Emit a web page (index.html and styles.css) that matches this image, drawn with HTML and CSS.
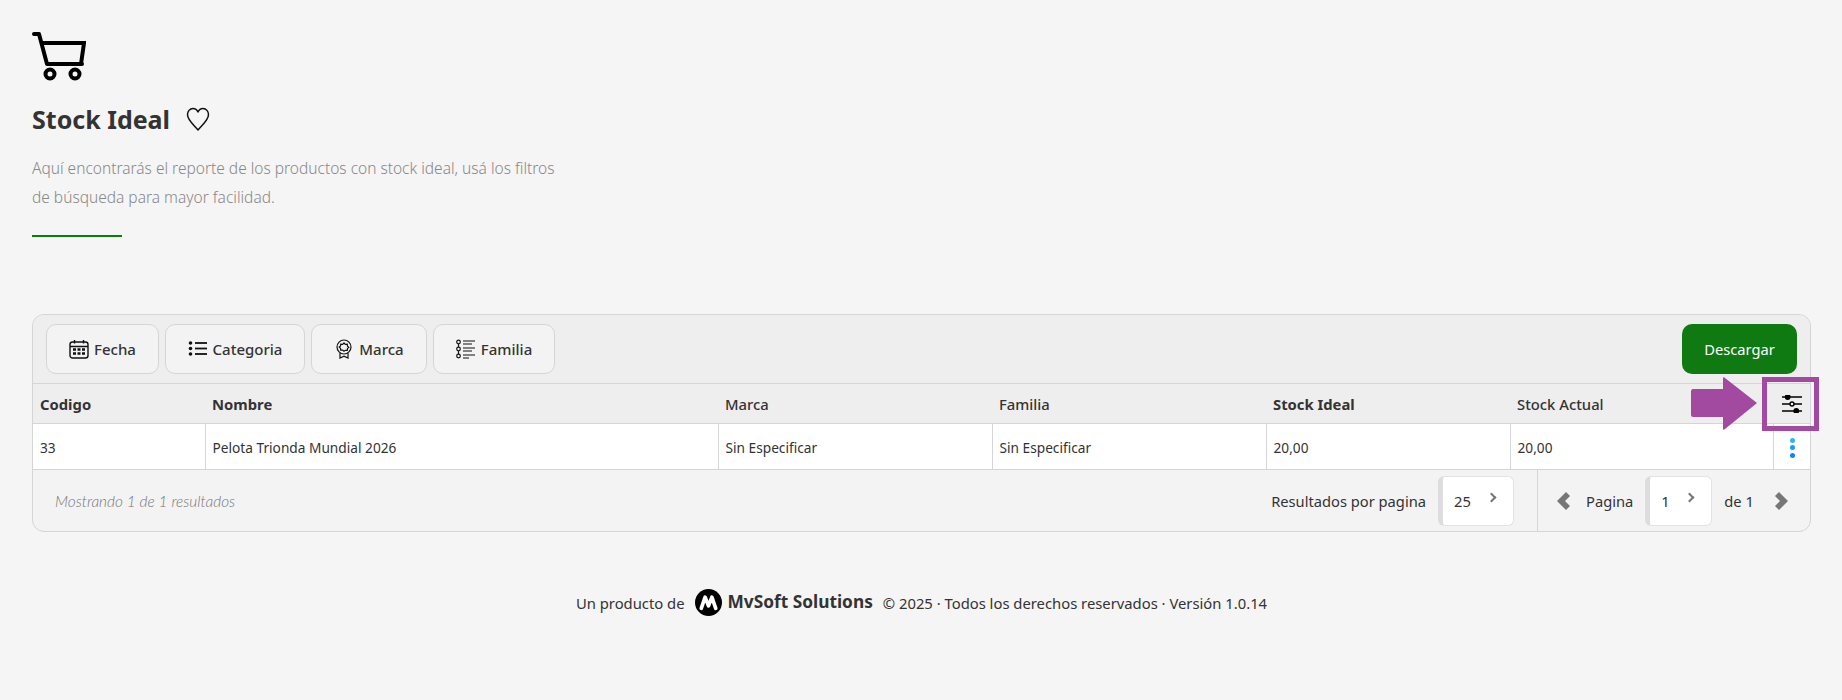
FILE: index.html
```html
<!DOCTYPE html>
<html lang="es">
<head>
  <meta charset="UTF-8" />
  <meta name="viewport" content="width=device-width, initial-scale=1.0"/>
  <title>Stock Ideal</title>
  <link rel="stylesheet" href="styles.css">
</head>
<body>

  <header class="page-head">
    <svg class="cart-icon" viewBox="0 0 54 49" fill="none" stroke="#000" stroke-width="4">
      <path d="M2 2h5l8 30h35" stroke-linejoin="round" stroke-linecap="round"/>
      <path d="M9 11h43l-3 21"/>
      <circle cx="18" cy="42" r="4.500"/>
      <circle cx="43" cy="42" r="4.500"/>
    </svg>
    <div class="title-row">
      <h1>Stock Ideal</h1>
      <svg class="heart-icon" viewBox="0 0 24 24" fill="none" stroke="#111" stroke-width="1.500">
        <path d="M12 23C7 17 1.500 13 1.500 7.500c0-3 2.200-6 5.500-6 2.200 0 4 1.300 5 3.500 1-2.200 2.800-3.500 5-3.500 3.300 0 5.500 3 5.500 6C22.500 13 17 17 12 23z" stroke-linejoin="round"/>
      </svg>
    </div>
    <p class="subtitle">Aquí encontrarás el reporte de los productos con stock ideal, usá los filtros de búsqueda para mayor facilidad.</p>
    <div class="green-line"></div>
  </header>

  <section class="report">
    <div class="toolbar">
      <div class="filters">
        <button class="filter-btn w-fecha">
          <svg class="btn-icon" viewBox="0 0 20 20" fill="none" stroke="#111" stroke-width="1.400">
            <rect x="1" y="3" width="18" height="16" rx="2.500"/>
            <path d="M1 7.500h18M5.500 1v3.500M14.500 1v3.500"/>
            <path d="M4 10.500h3M8.500 10.500h3M13 10.500h3M4 14.500h3M8.500 14.500h3M13 14.500h3" stroke-width="2.400"/>
          </svg>
          Fecha
        </button>
        <button class="filter-btn w-categoria">
          <svg class="btn-icon" viewBox="0 0 20 20" fill="#111">
            <circle cx="2.500" cy="4" r="1.800"/><circle cx="2.500" cy="9.500" r="1.800"/><circle cx="2.500" cy="15" r="1.800"/>
            <rect x="7" y="3.100" width="12" height="1.800"/><rect x="7" y="8.600" width="12" height="1.800"/><rect x="7" y="14.100" width="12" height="1.800"/>
          </svg>
          Categoria
        </button>
        <button class="filter-btn w-marca">
          <svg class="btn-icon" viewBox="0 0 20 20" fill="none" stroke="#111" stroke-width="1.200">
            <circle cx="10" cy="8" r="7"/>
            <path d="M10 3.800l1.300 1.500 2-.1.200 2 1.300 1-1.300 1.300-.2 1.800-2 0L10 12.200l-1.300-1.200-2 .1-.2-1.900L5.200 8l1.300-1 .2-1.800 2 .1z"/>
            <path d="M6 14v5l4-1.800 4 1.800v-5"/>
          </svg>
          Marca
        </button>
        <button class="filter-btn w-familia">
          <svg class="btn-icon" viewBox="0 0 20 20" fill="none" stroke="#111" stroke-width="1.200">
            <circle cx="2.500" cy="3" r="1.800"/><circle cx="2.500" cy="10" r="1.800"/><circle cx="2.500" cy="17" r="1.800"/>
            <path d="M2.500 5v3M2.500 12v3M7 2h12M7 5h9M7 9h12M7 12h9M7 16h12M7 19h6"/>
          </svg>
          Familia
        </button>
      </div>
      <button class="download-btn">Descargar</button>
    </div>

    <table class="stock-table">
      <colgroup>
        <col class="col-codigo"><col class="col-nombre"><col class="col-marca"><col class="col-familia"><col class="col-ideal"><col class="col-actual"><col class="col-actions">
      </colgroup>
      <thead>
        <tr>
          <th class="strong">Codigo</th>
          <th class="strong">Nombre</th>
          <th>Marca</th>
          <th>Familia</th>
          <th class="strong">Stock Ideal</th>
          <th>Stock Actual</th>
          <th class="actions">
            <svg class="sliders-icon" viewBox="0 0 20 18" fill="#000" stroke="#000" stroke-width="1.400">
              <path d="M0 2h20M0 9h20M0 16h20" fill="none"/>
              <circle cx="5.700" cy="2" r="2.200"/>
              <circle cx="10" cy="9" r="2" fill="#eee"/>
              <circle cx="14.300" cy="16" r="2.200"/>
            </svg>
          </th>
        </tr>
      </thead>
      <tbody>
        <tr>
          <td>33</td>
          <td>Pelota Trionda Mundial 2026</td>
          <td>Sin Especificar</td>
          <td>Sin Especificar</td>
          <td>20,00</td>
          <td>20,00</td>
          <td class="actions">
            <span class="dots"><i></i><i></i><i></i></span>
          </td>
        </tr>
      </tbody>
    </table>

    <div class="report-foot">
      <span class="showing">Mostrando 1 de 1 resultados</span>
      <div class="per-page">
        <span>Resultados por pagina</span>
        <div class="select-box w-perpage"><span>25</span><span class="caret"></span></div>
      </div>
      <div class="pager">
        <svg class="pager-arrow prev" viewBox="0 0 14 18" fill="#777"><path d="M9 0l4 4-5 5 5 5-4 4-9-9z"/></svg>
        <span>Pagina</span>
        <div class="select-box w-page"><span>1</span><span class="caret"></span></div>
        <span>de 1</span>
        <svg class="pager-arrow next" viewBox="0 0 14 18" fill="#777"><path d="M5 0l-4 4 5 5-5 5 4 4 9-9z"/></svg>
      </div>
    </div>

    <!-- highlight drawn over the screenshot -->
    <svg class="callout-arrow" viewBox="0 0 67 53" fill="#a24a9f"><path d="M2 12h30V1c0-1 1-1 2 0l32 25-32 26c-1 1-2 1-2 0V40H2c-1 0-2-1-2-2V14c0-1 1-2 2-2z"/></svg>
    <div class="callout-box"></div>
  </section>

  <footer class="page-foot">
    <span>Un producto de</span>
    <span class="brand">
      <svg class="brand-logo" viewBox="0 0 28 28">
        <circle cx="14" cy="14" r="14" fill="#000"/>
        <path d="M6.500 20L10.500 8.500l3.500 9 3.500-9L21.500 20" fill="none" stroke="#fff" stroke-width="3.800" stroke-linecap="round" stroke-linejoin="round"/>
      </svg>
      <b>MvSoft Solutions</b>
    </span>
    <span class="legal">© 2025 · Todos los derechos reservados · Versión 1.0.14</span>
  </footer>

</body>
</html>
```

FILE: styles.css
```css
* {
  box-sizing: border-box;
}

body {
  margin: 0;
  padding: 32px 31px 0 32px;
  background-color: #f5f5f5;
  color: #333;
  font-family: 'Noto Sans', 'Open Sans', sans-serif;
  font-size: 13.7px;
}

.page-head {
  height: 282px;
}

.cart-icon {
  display: block;
  width: 54px;
  height: 49px;
}

.title-row {
  display: flex;
  align-items: center;
  gap: 16px;
  margin-top: 22px;
  height: 32px;
}

h1 {
  margin: 0;
  font-size: 25px;
  font-weight: 700;
  color: #333;
}

.heart-icon {
  width: 24px;
  height: 24px;
}

.subtitle {
  margin: 19px 0 0;
  width: 540px;
  font-size: 15.500px;
  font-weight: 300;
  line-height: 29px;
  color: #888;
}

.green-line {
  width: 90px;
  height: 2px;
  margin-top: 23px;
  background: #0a7d0a;
}

.report {
  position: relative;
  border: 1px solid #d5d5d5;
  border-radius: 12px;
  background: #f3f3f3;
}

.toolbar {
  display: flex;
  justify-content: space-between;
  align-items: center;
  height: 68px;
  padding: 0 13px;
  background: #eee;
  border-radius: 12px 12px 0 0;
}

.filters {
  display: flex;
  gap: 6px;
}

.filter-btn {
  display: flex;
  align-items: center;
  justify-content: center;
  gap: 5px;
  height: 50px;
  background: #f3f3f3;
  border: 1px solid #d5d5d5;
  border-radius: 10px;
  font: 500 15px 'Noto Sans', sans-serif;
  color: #333;
}

.w-fecha { width: 113px; }
.w-categoria { width: 140px; }
.w-marca { width: 116px; }
.w-familia { width: 122px; }

.btn-icon {
  width: 20px;
  height: 20px;
}

.download-btn {
  width: 115px;
  height: 50px;
  background: #0f7a12;
  border: none;
  border-radius: 10px;
  color: #fff;
  font: 400 14.700px 'Noto Sans', sans-serif;
}

.stock-table {
  width: 100%;
  table-layout: fixed;
  border-collapse: collapse;
}

.col-codigo { width: 172px; }
.col-nombre { width: 513px; }
.col-marca { width: 274px; }
.col-familia { width: 274px; }
.col-ideal { width: 244px; }
.col-actual { width: 263px; }

.stock-table th {
  height: 40px;
  padding: 0 7px;
  text-align: left;
  font-size: 14.800px;
  font-weight: 500;
  background: #eee;
  border-top: 1px solid #d5d5d5;
  border-bottom: 1px solid #d5d5d5;
}

.stock-table th.strong {
  font-weight: 700;
}

.stock-table td {
  height: 46px;
  padding: 1px 7px 0;
  background: #fff;
  border-bottom: 1px solid #d5d5d5;
  border-right: 1px solid #d5d5d5;
}

.stock-table td:last-child {
  border-right: none;
}

.actions {
  text-align: center !important;
}

.sliders-icon {
  display: block;
  width: 20px;
  height: 18px;
  margin: 0 auto;
}

.dots {
  display: inline-flex;
  flex-direction: column;
  gap: 2.500px;
  margin-left: 1px;
  vertical-align: middle;
}

.dots i {
  width: 5px;
  height: 5px;
  border-radius: 50%;
  background: #1a9bf5;
}

.dots i:first-child {
  background: #29b6f6;
}

.dots i:last-child {
  background: #0a84ff;
}

.report-foot {
  display: flex;
  align-items: center;
  height: 61px;
  padding-left: 22px;
}

.showing {
  flex: 1;
  font-family: 'Lato', sans-serif;
  font-size: 15.400px;
  font-style: italic;
  font-weight: 300;
  color: #777;
}

.per-page {
  display: flex;
  align-items: center;
  gap: 12px;
  padding-right: 23px;
  font-size: 14.700px;
}

.pager {
  display: flex;
  align-items: center;
  gap: 12px;
  width: 273px;
  height: 100%;
  padding: 0 19px;
  border-left: 1px solid #d5d5d5;
  font-size: 14.700px;
}

.pager-arrow.prev {
  margin-right: 3px;
}

.pager-arrow.next {
  margin-left: 8px;
}

.select-box {
  display: flex;
  justify-content: space-between;
  align-items: center;
  height: 50px;
  padding: 0 18px 0 11px;
  background: #fff;
  border: 1px solid #e3e3e3;
  border-left: 5px solid #ddd;
  border-radius: 6px;
  font-size: 14.700px;
}

.w-perpage { width: 76px; }
.w-page { width: 67px; }

.caret {
  width: 7px;
  height: 7px;
  margin-bottom: 6px;
  border-top: 2px solid #777;
  border-right: 2px solid #777;
  transform: rotate(45deg);
}

.pager-arrow {
  width: 14px;
  height: 18px;
  flex: none;
}

.callout-box {
  position: absolute;
  left: 1729px;
  top: 62px;
  width: 57px;
  height: 54px;
  border: 5px solid #a24a9f;
}

.callout-arrow {
  position: absolute;
  left: 1658px;
  top: 62px;
  width: 67px;
  height: 53px;
}

.page-foot {
  display: flex;
  justify-content: center;
  align-items: center;
  gap: 10px;
  margin-top: 57px;
  font-size: 14.800px;
  color: #333;
}

.brand {
  display: flex;
  align-items: center;
  gap: 6px;
}

.brand b {
  margin-bottom: 2px;
  font-size: 17.300px;
  font-weight: 700;
}

.brand-logo {
  width: 27px;
  height: 27px;
}
```
